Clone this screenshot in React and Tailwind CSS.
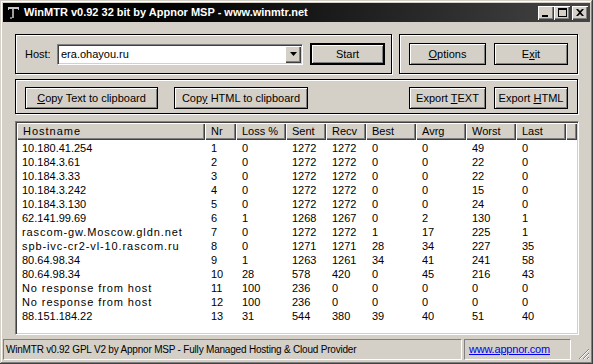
import React from "react";

const rows = [
  ["10.180.41.254", "1", "0", "1272", "1272", "0", "0", "49", "0"],
  ["10.184.3.61", "2", "0", "1272", "1272", "0", "0", "22", "0"],
  ["10.184.3.33", "3", "0", "1272", "1272", "0", "0", "22", "0"],
  ["10.184.3.242", "4", "0", "1272", "1272", "0", "0", "15", "0"],
  ["10.184.3.130", "5", "0", "1272", "1272", "0", "0", "24", "0"],
  ["62.141.99.69", "6", "1", "1268", "1267", "0", "2", "130", "1"],
  ["rascom-gw.Moscow.gldn.net", "7", "0", "1272", "1272", "1", "17", "225", "1"],
  ["spb-ivc-cr2-vl-10.rascom.ru", "8", "0", "1271", "1271", "28", "34", "227", "35"],
  ["80.64.98.34", "9", "1", "1263", "1261", "34", "41", "241", "58"],
  ["80.64.98.34", "10", "28", "578", "420", "0", "45", "216", "43"],
  ["No response from host", "11", "100", "236", "0", "0", "0", "0", "0"],
  ["No response from host", "12", "100", "236", "0", "0", "0", "0", "0"],
  ["88.151.184.22", "13", "31", "544", "380", "39", "40", "51", "40"],
];

const columns = [
  { name: "Hostname", w: "w-[188px]" },
  { name: "Nr", w: "w-[31px]" },
  { name: "Loss %", w: "w-[50px]" },
  { name: "Sent", w: "w-[40px]" },
  { name: "Recv", w: "w-[40px]" },
  { name: "Best", w: "w-[50px]" },
  { name: "Avrg", w: "w-[50px]" },
  { name: "Worst", w: "w-[50px]" },
  { name: "Last", w: "w-[50px]" },
];

function Button({ children, className = "", isDefault = false }) {
  return (
    <div
      className={`flex items-center justify-center h-[22px] bg-[#d4d0c8] text-black ${
        isDefault
          ? "border-2 border-black shadow-[inset_1px_1px_0_#fff,inset_-1px_-1px_0_#808080]"
          : "border border-black shadow-[inset_1px_1px_0_#fff,inset_-1px_-1px_0_#808080]"
      } ${className}`}
    >
      {children}
    </div>
  );
}

function CaptionButton({ children, className = "" }) {
  return (
    <div
      className={`w-[16px] h-[14px] bg-[#d4d0c8] flex items-center justify-center shadow-[inset_1px_1px_0_#fff,inset_-1px_-1px_0_#404040,inset_-2px_-2px_0_#808080] ${className}`}
    >
      {children}
    </div>
  );
}

function GroupBox({ children, className = "" }) {
  return (
    <div
      className={`border border-black shadow-[1px_1px_0_#fff,inset_1px_1px_0_#fff] flex ${className}`}
    >
      {children}
    </div>
  );
}

export default function App() {
  return (
    <div
      className="w-[593px] h-[364px] bg-[#d4d0c8] p-[3px] flex flex-col text-[11px] text-black shadow-[inset_-1px_-1px_0_#404040,inset_1px_1px_0_#d4d0c8,inset_-2px_-2px_0_#808080,inset_2px_2px_0_#fff] overflow-hidden"
      style={{ fontFamily: '"Liberation Sans", Arial, sans-serif' }}
    >
      {/* title bar */}
      <div className="h-[19px] flex items-center bg-gradient-to-r from-black to-[#464646] pl-[2px] pr-[2px]">
        <svg width="16" height="16" viewBox="0 0 16 16" className="shrink-0">
          <rect x="3" y="2" width="11" height="2" fill="#c8c8c8" />
          <rect x="3" y="2" width="1" height="3" fill="#c8c8c8" />
          <rect x="13" y="2" width="1" height="3" fill="#c8c8c8" />
          <rect x="7" y="4" width="2" height="9" fill="#a0a0a0" />
          <rect x="5" y="12" width="2" height="2" fill="#808080" />
        </svg>
        <span className="ml-[3px] text-white font-bold text-[11px] whitespace-nowrap">
          WinMTR v0.92 32 bit by Appnor MSP - www.winmtr.net
        </span>
        <div className="ml-auto flex items-center">
          <CaptionButton>
            <div className="w-[6px] h-[2px] bg-black mt-[6px] -ml-[2px]" />
          </CaptionButton>
          <CaptionButton>
            <div className="w-[9px] h-[9px] border border-black border-t-2 -mt-[1px]" />
          </CaptionButton>
          <CaptionButton className="ml-[2px]">
            <svg width="8" height="7" viewBox="0 0 8 7" className="-mt-[1px]">
              <path d="M0 0h2l2 2 2-2h2L5 3.5 8 7H6L4 5 2 7H0l3-3.5z" fill="#000" />
            </svg>
          </CaptionButton>
        </div>
      </div>

      {/* body */}
      <div className="flex flex-col px-[12px]">
        <div className="flex mt-[12px]">
          <GroupBox className="w-[377px] h-[40px] items-center pl-[9px]">
            <span className="w-[32px]">Host:</span>
            <div className="w-[246px] h-[21px] bg-white flex items-stretch border border-t-[#808080] border-l-[#808080] border-r-white border-b-white shadow-[inset_1px_1px_0_#404040,inset_-1px_-1px_0_#d4d0c8] p-[1px]">
              <span className="flex-1 pl-[2px] leading-[17px]">era.ohayou.ru</span>
              <div className="w-[16px] bg-[#d4d0c8] flex items-center justify-center shadow-[inset_1px_1px_0_#fff,inset_-1px_-1px_0_#404040,inset_-2px_-2px_0_#808080]">
                <svg width="7" height="4" viewBox="0 0 7 4">
                  <path d="M0 0h7L3.5 4z" fill="#000" />
                </svg>
              </div>
            </div>
            <Button isDefault className="w-[75px] ml-[7px]">Start</Button>
          </GroupBox>
          <GroupBox className="w-[179px] h-[40px] ml-[7px] items-center pl-[9px]">
            <Button className="w-[77px]">
              <span>
                <u>O</u>ptions
              </span>
            </Button>
            <Button className="w-[74px] ml-[8px]">
              <span>
                E<u>x</u>it
              </span>
            </Button>
          </GroupBox>
        </div>

        <GroupBox className="w-[563px] h-[35px] mt-[5px] items-start pt-[7px] pl-[9px] pr-[9px]">
          <Button className="w-[133px]">
            <span>
              <u>C</u>opy Text to clipboard
            </span>
          </Button>
          <Button className="w-[134px] ml-[16px]">
            <span>
              Cop<u>y</u> HTML to clipboard
            </span>
          </Button>
          <Button className="w-[77px] ml-auto">
            <span>
              Export <u>T</u>EXT
            </span>
          </Button>
          <Button className="w-[74px] ml-[8px]">
            <span>
              Export <u>H</u>TML
            </span>
          </Button>
        </GroupBox>

        {/* list view */}
        <div className="w-[564px] h-[214px] mt-[7px] bg-white border border-t-[#808080] border-l-[#808080] border-r-white border-b-white shadow-[inset_1px_1px_0_#404040,inset_-1px_-1px_0_#d4d0c8] p-[1px]">
          <div className="w-full h-full bg-white flex flex-col">
            <div className="flex h-[17px] shrink-0">
              {columns.map((c, j) => (
                <div
                  key={c.name}
                  className={`${c.w} ${j === 0 ? "tracking-[1px]" : ""} bg-[#d4d0c8] flex items-center pl-[6px] whitespace-nowrap shadow-[inset_1px_1px_0_#fff,inset_-1px_-1px_0_#404040,inset_-2px_-2px_0_#808080]`}
                >
                  {c.name}
                </div>
              ))}
              <div className="flex-1 bg-[#d4d0c8] shadow-[inset_1px_1px_0_#fff,inset_-1px_-1px_0_#404040,inset_-2px_-2px_0_#808080]" />
            </div>
            <div className="pt-[1px]">
              {rows.map((r, i) => (
                <div key={i} className="flex h-[14px] leading-[14px]">
                  {r.map((v, j) => (
                    <div
                      key={j}
                      className={`${columns[j].w} ${j === 0 ? "pl-[5px]" : "pl-[6px]"} ${
                        /[a-z]/i.test(v) ? "tracking-[0.9px]" : ""
                      } whitespace-nowrap overflow-hidden`}
                    >
                      {v}
                    </div>
                  ))}
                </div>
              ))}
            </div>
          </div>
        </div>
      </div>

      {/* status bar */}
      <div className="flex mt-[4px] h-[21px]">
        <div className="w-[459px] flex items-center pl-[2px] border border-t-[#808080] border-l-[#808080] border-r-white border-b-white text-[10px] tracking-[-0.2px] whitespace-nowrap overflow-hidden">
          WinMTR v0.92 GPL V2 by Appnor MSP - Fully Managed Hosting &amp; Cloud Provider
        </div>
        <div className="w-[107px] ml-[2px] flex items-center pl-[4px] border border-t-[#808080] border-l-[#808080] border-r-white border-b-white">
          <span className="text-[#0000ee] underline text-[11px] tracking-[-0.2px]">www.appnor.com</span>
        </div>
        <div className="flex-1 flex items-end justify-end">
          <svg width="12" height="12" viewBox="0 0 12 12">
            <path d="M11 1L1 11M11 5L5 11M11 9L9 11" stroke="#808080" strokeWidth="1" />
            <path d="M11 2L2 11M11 6L6 11M11 10L10 11" stroke="#fff" strokeWidth="1" />
          </svg>
        </div>
      </div>
    </div>
  );
}
